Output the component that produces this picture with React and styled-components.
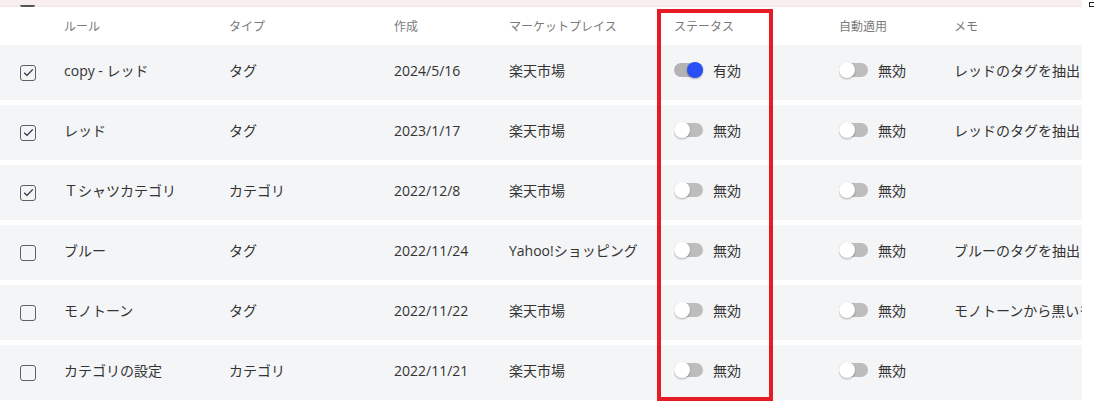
import React from "react";
import styled, { createGlobalStyle } from "styled-components";

const Global = createGlobalStyle`
  html, body { margin: 0; padding: 0; background: #fff; }
  body { font-family: "Open Sans", "Noto Sans CJK JP", sans-serif; }
`;

const Page = styled.div`
  position: relative;
  width: 1094px;
  height: 408px;
  overflow: hidden;
  background: #fff;
`;

const Table = styled.div`
  width: 1082px;
  display: flex;
  flex-direction: column;
  gap: 5px;
`;

const cols = "64px 165px 165px 115px 165px 165px 115px 1fr";

const TopStrip = styled.div`
  height: 7px;
  background: #f9eeee;
  display: flex;
  align-items: flex-end;
  padding-left: 20px;
  overflow: hidden;
  margin-bottom: -5px;
  box-shadow: inset 0 -1px 0 #f3e6e6;
`;

const StripBox = styled.div`
  width: 15px;
  height: 2px;
  background: #555;
  border-radius: 0 0 2px 2px;
`;

const HeaderRow = styled.div`
  display: grid;
  grid-template-columns: ${cols};
  height: 38px;
  align-items: center;
  margin-bottom: -5px;
`;

const HeadCell = styled.div`
  font-size: 12px;
  color: #7a7a7a;
  padding-left: ${(p) => (p.$first ? "20px" : "0")};
  white-space: nowrap;
`;

const Row = styled.div`
  display: grid;
  grid-template-columns: ${cols};
  height: 55px;
  align-items: center;
  background: #f4f5f7;
  overflow: hidden;
`;

const Cell = styled.div`
  font-size: 14px;
  color: #333;
  white-space: nowrap;
  overflow: hidden;
  display: flex;
  align-items: center;
  padding-left: ${(p) => (p.$first ? "20px" : "0")};
  padding-bottom: ${(p) => (p.$first ? "0" : "5px")};
`;

const Box = styled.div`
  width: 16px;
  height: 16px;
  box-sizing: border-box;
  border: 1.5px solid #5e6066;
  border-radius: 3px;
  display: flex;
  align-items: center;
  justify-content: center;
`;

const Track = styled.div`
  position: relative;
  width: 29px;
  height: 14px;
  border-radius: 7px;
  background: ${(p) => (p.$on ? "#b3b3b3" : "#bdbdbd")};
  margin-right: 10px;
  flex-shrink: 0;
`;

const Knob = styled.div`
  position: absolute;
  top: -1px;
  left: ${(p) => (p.$on ? "13px" : "0px")};
  width: 16px;
  height: 16px;
  border-radius: 50%;
  background: ${(p) => (p.$on ? "#2a4ff6" : "#fff")};
  box-shadow: 0 1px 2px rgba(0, 0, 0, 0.3);
`;

const Highlight = styled.div`
  position: absolute;
  left: 657px;
  top: 9px;
  width: 116px;
  height: 392px;
  box-sizing: border-box;
  border: 4px solid #e61b23;
  pointer-events: none;
`;

const Corner = styled.div`
  position: absolute;
  left: 1089px;
  top: 2px;
  width: 6px;
  height: 5px;
  box-sizing: border-box;
  border: 1.5px solid #222;
`;

const Check = () => (
  <svg width="11" height="9" viewBox="0 0 11 9">
    <path d="M1.2 4.8 L4 7.4 L9.8 1.4" fill="none" stroke="#2b2f45" strokeWidth="1.3" />
  </svg>
);

const Toggle = ({ on }) => (
  <>
    <Track $on={on}>
      <Knob $on={on} />
    </Track>
    {on ? "有効" : "無効"}
  </>
);

const data = [
  { c: true, rule: "copy - レッド", type: "タグ", date: "2024/5/16", mp: "楽天市場", st: true, memo: "レッドのタグを抽出" },
  { c: true, rule: "レッド", type: "タグ", date: "2023/1/17", mp: "楽天市場", st: false, memo: "レッドのタグを抽出" },
  { c: true, rule: "Ｔシャツカテゴリ", type: "カテゴリ", date: "2022/12/8", mp: "楽天市場", st: false, memo: "" },
  { c: false, rule: "ブルー", type: "タグ", date: "2022/11/24", mp: "Yahoo!ショッピング", st: false, memo: "ブルーのタグを抽出" },
  { c: false, rule: "モノトーン", type: "タグ", date: "2022/11/22", mp: "楽天市場", st: false, memo: "モノトーンから黒いものを抽出" },
  { c: false, rule: "カテゴリの設定", type: "カテゴリ", date: "2022/11/21", mp: "楽天市場", st: false, memo: "" },
];

export default function App() {
  return (
    <Page>
      <Global />
      <Table>
        <TopStrip>
          <StripBox />
        </TopStrip>
        <HeaderRow>
          <HeadCell $first />
          <HeadCell>ルール</HeadCell>
          <HeadCell>タイプ</HeadCell>
          <HeadCell>作成</HeadCell>
          <HeadCell>マーケットプレイス</HeadCell>
          <HeadCell>ステータス</HeadCell>
          <HeadCell>自動適用</HeadCell>
          <HeadCell>メモ</HeadCell>
        </HeaderRow>
        {data.map((r, i) => (
          <Row key={i}>
            <Cell $first>
              <Box>{r.c && <Check />}</Box>
            </Cell>
            <Cell>{r.rule}</Cell>
            <Cell>{r.type}</Cell>
            <Cell>{r.date}</Cell>
            <Cell>{r.mp}</Cell>
            <Cell>
              <Toggle on={r.st} />
            </Cell>
            <Cell>
              <Toggle on={false} />
            </Cell>
            <Cell>{r.memo}</Cell>
          </Row>
        ))}
      </Table>
      <Highlight />
      <Corner />
    </Page>
  );
}
